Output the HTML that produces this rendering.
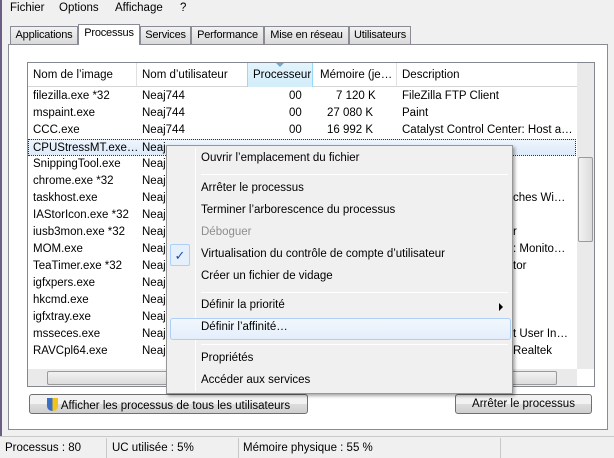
<!DOCTYPE html>
<html><head><meta charset="utf-8"><style>
*{margin:0;padding:0;box-sizing:border-box}
body{width:614px;height:458px;overflow:hidden;background:#f0f0f0;font-family:"Liberation Sans",sans-serif;font-size:11.5px;color:#000;position:relative}
.a{position:absolute;white-space:nowrap}
.tab{position:absolute;top:26px;height:18px;border:1px solid #898c95;border-bottom:none;background:linear-gradient(#f2f2f2,#dadada);padding-top:2px;text-align:center;white-space:nowrap;font-size:11px;letter-spacing:-0.2px;overflow:hidden}
.row{position:absolute;left:28px;width:548px;height:17px}
.row span{position:absolute;top:2px}
.mi{position:absolute;left:34px}
.sep{position:absolute;left:34px;right:4px;height:1px;background:#d7d7d7;border-bottom:1px solid #fff}
.btn{position:absolute;top:394px;height:20px;border:1px solid #707070;border-radius:3px;background:linear-gradient(#f2f2f2 50%,#dddddd 50%,#cfcfcf);text-align:center;padding-top:3px;white-space:nowrap}
</style></head><body>
<div class="a" style="left:0;top:0;width:2px;height:458px;background:#6b5e84"></div>
<div class="a" style="left:10px;top:2px">Fichier</div>
<div class="a" style="left:59px;top:2px">Options</div>
<div class="a" style="left:115px;top:2px">Affichage</div>
<div class="a" style="left:180px;top:2px">?</div>
<div class="a" style="left:8px;top:44px;width:600px;height:386px;border:1px solid #898c95;background:#fff"></div>
<div class="tab" style="left:10px;width:68px">Applications</div>
<div class="tab" style="left:78px;top:24px;height:21px;width:62px;background:#fff;border-bottom:none">Processus</div>
<div class="tab" style="left:140px;width:51px">Services</div>
<div class="tab" style="left:191px;width:73px">Performance</div>
<div class="tab" style="left:264px;width:85px">Mise en réseau</div>
<div class="tab" style="left:349px;width:62px">Utilisateurs</div>
<div class="a" style="left:27px;top:62px;width:568px;height:325px;border:1px solid #828790;background:#fff"></div>
<div class="a" style="left:28px;top:63px;width:549px;height:24px;background:#fff;border-bottom:1px solid #d5d5d5"></div>
<div class="a" style="left:247px;top:63px;width:66px;height:24px;background:linear-gradient(#e3f4fc,#d3edf9);border-left:1px solid #96d9f9;border-right:1px solid #96d9f9"></div>
<div class="a" style="left:276px;top:63px;width:0;height:0;border-left:4px solid transparent;border-right:4px solid transparent;border-top:4px solid #6fa8c8"></div>
<div class="a" style="left:136px;top:63px;width:1px;height:24px;background:#e0e0e0"></div>
<div class="a" style="left:396px;top:63px;width:1px;height:24px;background:#e0e0e0"></div>
<div class="a" style="left:33px;top:69px">Nom de l’image</div>
<div class="a" style="left:142px;top:69px">Nom d’utilisateur</div>
<div class="a" style="left:253px;top:69px">Processeur</div>
<div class="a" style="left:320px;top:69px">Mémoire (je…</div>
<div class="a" style="left:402px;top:69px">Description</div>
<div class="row" style="top:88px"><span style="left:5px">filezilla.exe *32</span><span style="left:114px">Neaj744</span><span style="left:261px">00</span><span style="left:308px">7 120 K</span><span style="left:374px">FileZilla FTP Client</span></div>
<div class="row" style="top:105px"><span style="left:5px">mspaint.exe</span><span style="left:114px">Neaj744</span><span style="left:261px">00</span><span style="left:299px">27 080 K</span><span style="left:374px">Paint</span></div>
<div class="row" style="top:122px"><span style="left:5px">CCC.exe</span><span style="left:114px">Neaj744</span><span style="left:261px">00</span><span style="left:299px">16 992 K</span><span style="left:374px">Catalyst Control Center: Host a…</span></div>
<div class="row" style="top:139px;background:linear-gradient(#eef5fc,#dceafa);border:1px dotted #333"><span style="left:4px">CPUStressMT.exe…</span><span style="left:113px">Neaj</span></div>
<div class="row" style="top:156px"><span style="left:5px">SnippingTool.exe</span><span style="left:114px">Neaj</span></div>
<div class="row" style="top:173px"><span style="left:5px">chrome.exe *32</span><span style="left:114px">Neaj</span></div>
<div class="row" style="top:190px"><span style="left:5px">taskhost.exe</span><span style="left:114px">Neaj</span><span style="left:485px">ches Wi…</span></div>
<div class="row" style="top:207px"><span style="left:5px">IAStorIcon.exe *32</span><span style="left:114px">Neaj</span></div>
<div class="row" style="top:224px"><span style="left:5px">iusb3mon.exe *32</span><span style="left:114px">Neaj</span><span style="left:485px">r</span></div>
<div class="row" style="top:241px"><span style="left:5px">MOM.exe</span><span style="left:114px">Neaj</span><span style="left:485px">: Monito…</span></div>
<div class="row" style="top:258px"><span style="left:5px">TeaTimer.exe *32</span><span style="left:114px">Neaj</span><span style="left:485px">tor</span></div>
<div class="row" style="top:275px"><span style="left:5px">igfxpers.exe</span><span style="left:114px">Neaj</span></div>
<div class="row" style="top:292px"><span style="left:5px">hkcmd.exe</span><span style="left:114px">Neaj</span></div>
<div class="row" style="top:309px"><span style="left:5px">igfxtray.exe</span><span style="left:114px">Neaj</span></div>
<div class="row" style="top:326px"><span style="left:5px">msseces.exe</span><span style="left:114px">Neaj</span><span style="left:485px">t User In…</span></div>
<div class="row" style="top:343px"><span style="left:5px">RAVCpl64.exe</span><span style="left:114px">Neaj</span><span style="left:485px">Realtek</span></div>
<div class="a" style="left:577px;top:63px;width:17px;height:306px;background:#eaeaea"></div>
<div class="a" style="left:578px;top:157px;width:15px;height:85px;border:1px solid #9a9a9a;border-radius:2px;background:linear-gradient(90deg,#f2f2f2,#dcdcdc)"></div>
<div class="a" style="left:28px;top:369px;width:549px;height:17px;background:#eaeaea"></div>
<div class="a" style="left:47px;top:371px;width:510px;height:14px;border:1px solid #9a9a9a;border-radius:2px;background:linear-gradient(#f2f2f2,#dcdcdc)"></div>
<div class="btn" style="left:29px;width:279px"><span style="display:inline-block;width:11px;height:13px;background:linear-gradient(90deg,#3a6fc4 50%,#f2c21b 50%);border-radius:0 0 5px 5px;vertical-align:-2px;margin-right:3px"></span>Afficher les processus de tous les utilisateurs</div>
<div class="btn" style="left:455px;width:137px">Arrêter le processus</div>
<div class="a" style="left:0;top:436px;width:614px;height:22px;background:#f0f0f0;border-top:1px solid #c8c8c8"></div>
<div class="a" style="left:106px;top:438px;width:1px;height:20px;background:#c8c8c8"></div>
<div class="a" style="left:238px;top:438px;width:1px;height:20px;background:#c8c8c8"></div>
<div class="a" style="left:500px;top:438px;width:1px;height:20px;background:#c8c8c8"></div>
<div class="a" style="left:5px;top:442px">Processus : 80</div>
<div class="a" style="left:112px;top:442px">UC utilisée : 5%</div>
<div class="a" style="left:243px;top:442px">Mémoire physique : 55 %</div>
<div class="a" style="left:166px;top:145px;width:347px;height:249px;background:#f0f0f0;border:1px solid #979797;box-shadow:2px 2px 3px rgba(0,0,0,.35)">
<div class="a" style="left:28px;top:2px;width:1px;height:243px;background:#e2e3e3;border-right:1px solid #fff"></div>
<div class="mi" style="top:6px">Ouvrir l’emplacement du fichier</div>
<div class="sep" style="top:28px"></div>
<div class="mi" style="top:36px">Arrêter le processus</div>
<div class="mi" style="top:58px">Terminer l’arborescence du processus</div>
<div class="mi" style="top:80px;color:#8d8d8d">Déboguer</div>
<div class="a" style="left:3px;top:98px;width:20px;height:22px;border:1px solid #aecff7;border-radius:2px;background:#e6f0fb;color:#1d4fa6;text-align:center;padding-top:3px;font-size:13px">✓</div>
<div class="mi" style="top:102px">Virtualisation du contrôle de compte d’utilisateur</div>
<div class="mi" style="top:124px">Créer un fichier de vidage</div>
<div class="sep" style="top:146px"></div>
<div class="mi" style="top:153px">Définir la priorité</div>
<div class="a" style="left:332px;top:157px;width:0;height:0;border-top:4px solid transparent;border-bottom:4px solid transparent;border-left:4px solid #000"></div>
<div class="a" style="left:3px;top:172px;width:341px;height:22px;border:1px solid #aecff7;border-radius:3px;background:linear-gradient(#f2f7fd,#e4eefb)"></div>
<div class="mi" style="top:175px">Définir l’affinité…</div>
<div class="sep" style="top:198px"></div>
<div class="mi" style="top:206px">Propriétés</div>
<div class="mi" style="top:228px">Accéder aux services</div>
</div>
</body></html>
